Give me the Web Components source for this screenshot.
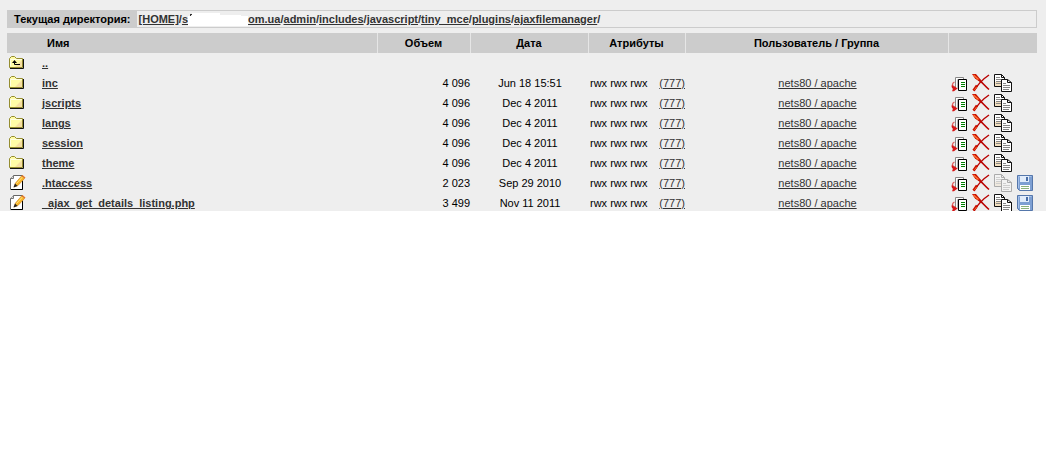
<!DOCTYPE html>
<html lang="ru">
<head>
<meta charset="utf-8">
<title>File manager</title>
<style>
  body {
    margin: 0;
    background: #fff;
    color: #000;
    font: 11px/20px "Liberation Sans", Arial, sans-serif;
    --bar: #ccc;
    --panel: #eee;
    --link: #333;
  }
</style>
</head>
<body>
<file-manager>
  <path-bar slot="path" label="Текущая директория:"></path-bar>
  <file-table></file-table>
</file-manager>

<script>
const FOLDER = `
    <path d="M.5 13.5v-9l2-2h3l2 2h6v9z" fill="#fffca6" stroke="#948c30"/>
    <path d="M6 13l7-7v7z" fill="#f6dfa2"/>
    <path d="M1.5 12V5.5H13" fill="none" stroke="#ffffe0"/>
    <path d="M1 14.5h13.500V5" fill="none" stroke="#111"/>`;

const ICONS = {
  folder: FOLDER,
  up: `${FOLDER}
    <path d="M5.500 8v2.500H11" fill="none" stroke="#000"/>
    <path d="M3 9l2.500-3L8 9z" fill="#000"/>`,
  edit: `
    <path d="M1.500 4.500l3-3h9v14h-12z" fill="#fff" stroke="#666"/>
    <path d="M1.500 4.500h3v-3" fill="#ddd" stroke="#777"/>
    <path d="M2 15.500h11.500V7" fill="none" stroke="#000"/>
    <path d="M5 13l1.500-4L12.500 2l3 2.500L9 11.500z" fill="#f9b528" stroke="#c77c12" stroke-width=".6"/>
    <path d="M7.500 9.500L13.500 3" stroke="#ffe67c"/>
    <path d="M12.500 2l1-1 3 2.500-1 1z" fill="#e87828"/>
    <path d="M4.500 13.500l1.500-4L8.500 12z" fill="#222"/>`,
  move: `
    <path d="M5.500 14V3.500h8V6" fill="#fff" stroke="#888"/>
    <path d="M7.500 15V5.500h6" fill="#fff" stroke="#bbb"/>
    <path d="M8.500 5.500h8v11h-8z" fill="#fff" stroke="#000"/>
    <path d="M11 8.500h4M11 10.500h4M11 12.500h4" stroke="#008000"/>
    <path d="M4.500 8C2.500 9 2 11 3 13" fill="none" stroke="#e06060" stroke-width="1.200"/>
    <path d="M2.500 11.500c0 2 .5 3 3 3" fill="none" stroke="#d01818" stroke-width="2"/>
    <path d="M4 12l3.500 2.500L4 17.200H2z" fill="#d81818"/>`,
  remove: `
    <path d="M17 1C11 5 6 10 2 17" fill="none" stroke="#b80000" stroke-width="1.500"/>
    <path d="M5 11.500L1.500 16.500" stroke="#c81000" stroke-width="2.600"/>
    <path d="M4.500 13L2.500 16" stroke="#f06030"/>
    <path d="M5 4C9 7 12 11 17 15.500" fill="none" stroke="#b80000" stroke-width="1.600"/>
    <path d="M0 0h4l5 6-1 2-5-3.500z" fill="#c81000"/>
    <path d="M1.500 1l5 4.500" stroke="#ff7838" stroke-width="1.400"/>`,
  copy: `
    <path d="M.5.5h7l3 3v9h-10z" fill="#fff" stroke="#111"/>
    <path d="M1 8h9v4H1z" fill="#f2dfbf"/>
    <path d="M7.500.5v3h3" fill="none" stroke="#111"/>
    <path d="M2 3.500h4M2 5.500h7M2 7.500h7M2 9.500h6" stroke="#888"/>
    <path d="M7.500 5.500h6l4 3v9h-10z" fill="#fff" stroke="#111"/>
    <path d="M13.500 5.500v3h4" fill="none" stroke="#111"/>
    <path d="M9 9.500h3M9 11.500h7M9 13.500h7M9 15.500h6" stroke="#888"/>`,
  save: `
    <path d="M1.500 1.500h15v15h-13l-2-2z" fill="#7d9fd2" stroke="#5577ab"/>
    <path d="M2.500 14V2.500h13" fill="none" stroke="#a5c0e8"/>
    <path d="M4 2h9v6H4z" fill="#e1ecfa"/>
    <path d="M10 3h2v4h-2z" fill="#486da6"/>
    <path d="M4 11h10v5H4z" fill="#fff"/>
    <path d="M5 12.500h8M5 14.500h8" stroke="#8bb37c"/>`,
};

class FmIcon extends HTMLElement {
  connectedCallback() {
    this.attachShadow({ mode: 'open' }).innerHTML = `
      <style>
        :host { display: block; width: 18px; height: 18px; }
        :host([disabled]) { opacity: 0.3; }
        svg { display: block; }
      </style>
      <svg width="18" height="18" viewBox="0 0 18 18" aria-hidden="true">${ICONS[this.getAttribute('name')]}</svg>
    `;
  }
}

class FileManager extends HTMLElement {
  constructor() {
    super();
    this.attachShadow({ mode: 'open' }).innerHTML = `
      <style>
        :host {
          display: block;
          overflow: hidden;
          background: var(--panel);
          padding: 10px 9px 0 7px;
        }
        .path { margin-bottom: 5px; }
        /* the listing runs slightly past the panel's lower edge */
        .list { margin-bottom: -2px; }
      </style>
      <div class="path"><slot name="path"></slot></div>
      <div class="list"><slot></slot></div>
    `;
  }
}

class PathBar extends HTMLElement {
  connectedCallback() {
    const dirs = ['admin', 'includes', 'javascript', 'tiny_mce', 'plugins', 'ajaxfilemanager'];
    this.attachShadow({ mode: 'open' }).innerHTML = `
      <style>
        :host {
          display: flex;
          border: 1px solid var(--bar);
          line-height: 16px;
          font-weight: bold;
        }
        .label { background: var(--bar); padding: 0 6px; }
        nav { padding: 0 2px; white-space: nowrap; color: var(--link); }
        a { color: var(--link); }
        .mask { vertical-align: top; margin-top: 2px; }
      </style>
      <span class="label">${this.getAttribute('label')}</span>
      <nav><a href="#">[HOME]</a>/<a href="#">s<svg class="mask" width="60" height="13" viewBox="0 0 60 13" aria-hidden="true"><path d="M0 3h4V0h28v2h21v1h7v10H0z" fill="#fff"/><path d="M2 1h2v1H3v1H2z" fill="#333"/></svg>om.ua</a>/${dirs.map(d => `<a href="#">${d}</a>/`).join('')}</nav>
    `;
  }
}

const FILES = [
  { name: 'inc', size: '4 096', date: 'Jun 18 15:51', dir: true },
  { name: 'jscripts', size: '4 096', date: 'Dec 4 2011', dir: true },
  { name: 'langs', size: '4 096', date: 'Dec 4 2011', dir: true },
  { name: 'session', size: '4 096', date: 'Dec 4 2011', dir: true },
  { name: 'theme', size: '4 096', date: 'Dec 4 2011', dir: true },
  { name: '.htaccess', size: '2 023', date: 'Sep 29 2010', copyDisabled: true },
  { name: '_ajax_get_details_listing.php', size: '3 499', date: 'Nov 11 2011' },
];

class FileTable extends HTMLElement {
  connectedCallback() {
    this.attachShadow({ mode: 'open' }).innerHTML = `
      <style>
        :host { display: block; }
        table { width: 100%; border-collapse: collapse; table-layout: fixed; }
        th, td { height: 20px; padding: 0; text-align: center; white-space: nowrap; }
        th { background: var(--bar); }
        th + th { box-shadow: inset 1px 0 #e6e6e6; }
        th:first-child { text-align: left; padding-left: 40px; }
        td { padding-left: 2px; }
        td.name { text-align: left; font-weight: bold; padding-left: 0; }
        td.size { text-align: right; }
        a { color: var(--link); }
        .icon { width: 35px; }
        .c-size { width: 93px; }
        .c-date { width: 118px; }
        .c-attr { width: 97px; }
        .c-owner { width: 263px; }
        .c-tools { width: 89px; }
        .attr { display: flex; justify-content: space-between; }
        .tools { display: flex; gap: 4px; }
        button { border: 0; padding: 0; background: none; cursor: pointer; }
      </style>
      <table>
        <colgroup>
          <col class="icon"><col><col class="c-size"><col class="c-date">
          <col class="c-attr"><col class="c-owner"><col class="c-tools">
        </colgroup>
        <thead>
          <tr><th colspan="2">Имя</th><th>Объем</th><th>Дата</th><th>Атрибуты</th><th>Пользователь / Группа</th><th></th></tr>
        </thead>
        <tbody>
          <tr><td><fm-icon name="up"></fm-icon></td><td class="name"><a href="#">..</a></td><td colspan="5"></td></tr>
          ${FILES.map(f => this.row(f)).join('')}
        </tbody>
      </table>
    `;
  }

  row(f) {
    return `
      <tr>
        <td><fm-icon name="${f.dir ? 'folder' : 'edit'}"></fm-icon></td>
        <td class="name"><a href="#">${f.name}</a></td>
        <td class="size">${f.size}</td>
        <td>${f.date}</td>
        <td><div class="attr"><span>rwx rwx rwx</span><a href="#">(777)</a></div></td>
        <td><a href="#">nets80 / apache</a></td>
        <td>
          <div class="tools">
            <button aria-label="Move"><fm-icon name="move"></fm-icon></button>
            <button aria-label="Delete"><fm-icon name="remove"></fm-icon></button>
            <button aria-label="Copy"><fm-icon name="copy"${f.copyDisabled ? ' disabled' : ''}></fm-icon></button>
            ${f.dir ? '' : '<button aria-label="Save"><fm-icon name="save"></fm-icon></button>'}
          </div>
        </td>
      </tr>`;
  }
}

customElements.define('fm-icon', FmIcon);
customElements.define('file-manager', FileManager);
customElements.define('path-bar', PathBar);
customElements.define('file-table', FileTable);
</script>
</body>
</html>
